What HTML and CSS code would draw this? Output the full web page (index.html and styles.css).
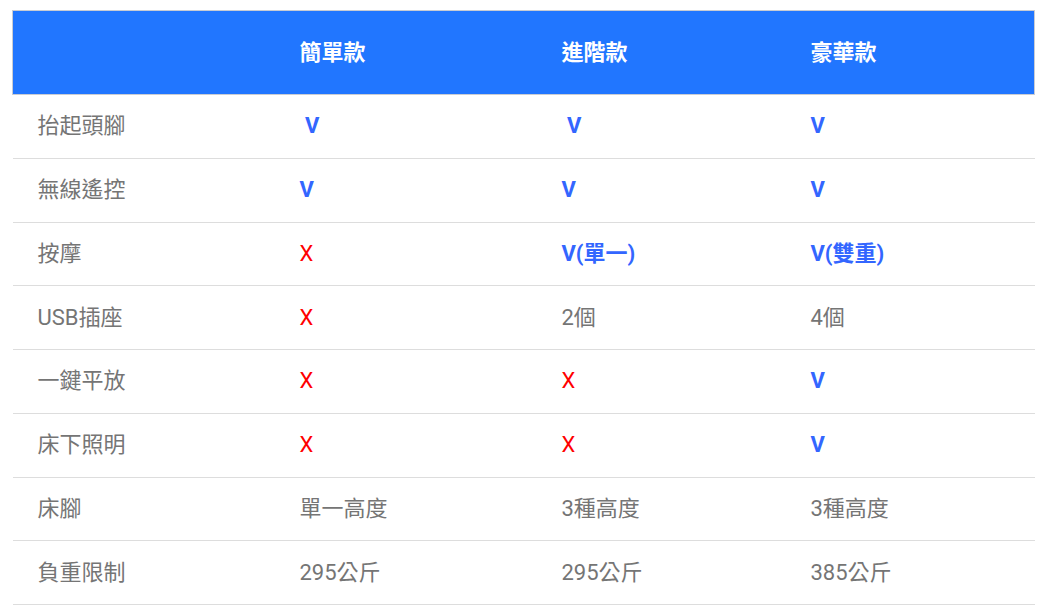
FILE: index.html
```html
<!DOCTYPE html>
<html lang="zh-Hant">
<head>
<meta charset="utf-8">
<link rel="stylesheet" href="styles.css">
</head>
<body>
<div class="wrap">
<table class="spec">
  <colgroup>
    <col class="c1"><col class="c2"><col class="c3"><col class="c4">
  </colgroup>
  <thead>
    <tr><th></th><th>簡單款</th><th>進階款</th><th>豪華款</th></tr>
  </thead>
  <tbody>
    <tr><td>抬起頭腳</td><td class="yes">&nbsp;V</td><td class="yes">&nbsp;V</td><td class="yes">V</td></tr>
    <tr><td>無線遙控</td><td class="yes">V</td><td class="yes">V</td><td class="yes">V</td></tr>
    <tr><td>按摩</td><td class="no">X</td><td class="yes">V(單一)</td><td class="yes">V(雙重)</td></tr>
    <tr><td>USB插座</td><td class="no">X</td><td>2個</td><td>4個</td></tr>
    <tr><td>一鍵平放</td><td class="no">X</td><td class="no">X</td><td class="yes">V</td></tr>
    <tr><td>床下照明</td><td class="no">X</td><td class="no">X</td><td class="yes">V</td></tr>
    <tr><td>床腳</td><td>單一高度</td><td>3種高度</td><td>3種高度</td></tr>
    <tr><td>負重限制</td><td>295公斤</td><td>295公斤</td><td>385公斤</td></tr>
  </tbody>
</table>
</div>
</body>
</html>
```
FILE: styles.css
```css
html, body {
  margin: 0;
  padding: 0;
  background: #ffffff;
}
.wrap {
  padding: 10px 0 0 12px;
}
.spec {
  border-collapse: collapse;
  table-layout: fixed;
  width: 1022px;
  font-family: Roboto, "Noto Sans CJK TC", sans-serif;
  font-size: 22px;
  color: #757575;
}
.c1 { width: 262px; }
.c2 { width: 262px; }
.c3 { width: 249px; }
.c4 { width: 249px; }
.spec th {
  background: #2176ff;
  color: #ffffff;
  font-weight: 700;
  text-align: left;
  height: 83px;
  padding: 0 0 0 25px;
  border-top: 1px solid #c9ccd3;
  border-bottom: 1px solid #c9ccd3;
  line-height: 1;
}
.spec th:first-child { border-left: 1px solid #c9ccd3; }
.spec th:last-child { border-right: 1px solid #c9ccd3; }
.spec td {
  height: 62.75px;
  padding: 0 0 0 25px;
  border-bottom: 1px solid #dddddd;
  line-height: 1;
  white-space: pre;
}
.spec td.yes {
  color: #3366ff;
  font-weight: 700;
}
.spec td.no {
  color: #ff0000;
}
```
